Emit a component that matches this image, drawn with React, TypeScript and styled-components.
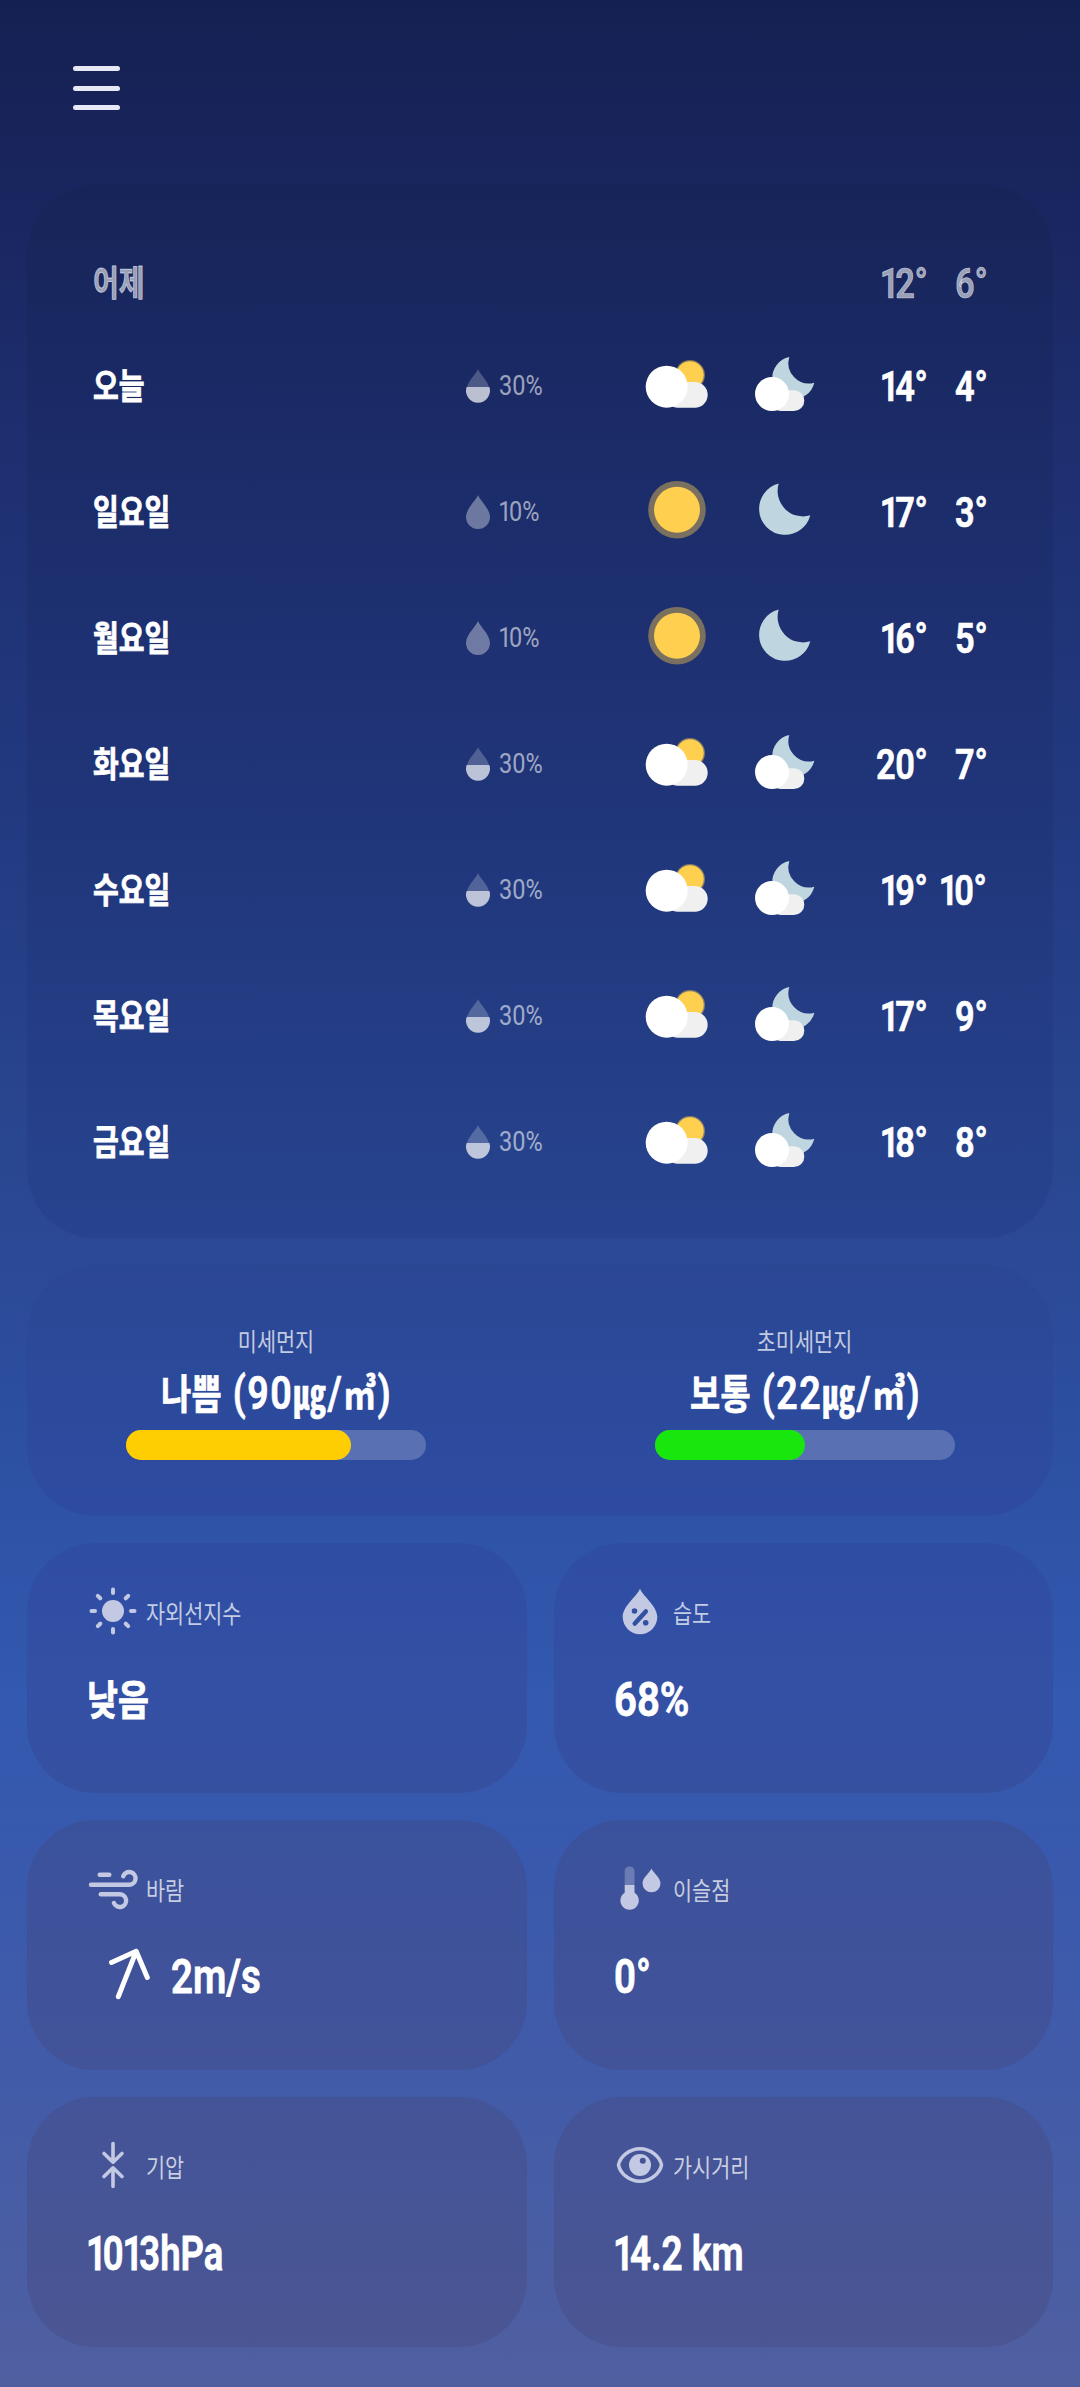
import React from "react";
import styled, { createGlobalStyle } from "styled-components";

const GlobalStyle = createGlobalStyle`
  * { box-sizing: border-box; }
  body {
    margin: 0;
    font-family: Roboto, "Noto Sans CJK KR", sans-serif;
    color: #fff;
  }
`;

const Screen = styled.main`
  width: 1080px;
  height: 2387px;
  padding: 0 27px;
  overflow: hidden;
  background: linear-gradient(
    180deg,
    #152052 0px,
    #19255e 190px,
    #1e2f70 450px,
    #223980 800px,
    #294790 1150px,
    #2b4996 1260px,
    #2e53a7 1530px,
    #3359b0 1700px,
    #3859ad 1850px,
    #415ba9 2050px,
    #475da5 2200px,
    #505fa0 2387px
  );
`;

const Header = styled.header`
  height: 185px;
  padding: 66px 0 0 46px;
`;

const MenuButton = styled.button`
  display: flex;
  flex-direction: column;
  gap: 14.5px;
  width: 47px;
  padding: 0;
  border: 0;
  background: none;
`;

const MenuLine = styled.span`
  height: 5px;
  border-radius: 2.5px;
  background: #e6e9f5;
`;

const Stack = styled.div`
  display: flex;
  flex-direction: column;
  gap: 27px;
`;

const Card = styled.section<{ $tint: string }>`
  border-radius: 68px;
  background: ${(p) => p.$tint};
`;

const ForecastCard = styled(Card)`
  height: 1053px;
  padding: 58px 66px 0;
`;

const Row = styled.div<{ $past?: boolean }>`
  display: grid;
  grid-template-columns: 373px 179px 108px 94px 81px 59px;
  align-items: center;
  height: ${(p) => (p.$past ? 80 : 126)}px;
  color: ${(p) => (p.$past ? "rgba(255,255,255,.58)" : "#fff")};
`;

/* The interface typeface is narrow, so glyph runs are condensed horizontally. */
const Narrow = styled.span<{ $origin?: string; $scale?: number }>`
  display: inline-block;
  white-space: nowrap;
  transform: scaleX(${(p) => p.$scale ?? 0.8});
  transform-origin: ${(p) => p.$origin ?? "left"} center;
`;

const Day = styled(Narrow)`
  margin-top: 4px;
  font-size: 35px;
  line-height: 48px;
  font-weight: 700;
  -webkit-text-stroke: 0.8px currentColor;
`;

const Rain = styled.div`
  display: flex;
  align-items: center;
  gap: 9px;
`;

const RainText = styled(Narrow)`
  font-size: 28px;
  line-height: 32px;
  color: rgba(255, 255, 255, 0.58);
`;

const Temp = styled(Narrow)`
  justify-self: end;
  font-size: 43px;
  line-height: 50px;
  font-weight: 600;
  letter-spacing: -0.4px;
  -webkit-text-stroke: 0.7px currentColor;
`;

const SlimOne = styled.span`
  margin: 0 -0.11em 0 -0.03em;
`;

const DustCard = styled(Card)`
  display: flex;
  gap: 229px;
  height: 251px;
  padding: 60px 98px 0 99px;
`;

const Dust = styled.div`
  display: flex;
  flex-direction: column;
  align-items: center;
  width: 300px;
`;

const Label = styled(Narrow)`
  font-size: 25px;
  line-height: 36px;
  color: rgba(255, 255, 255, 0.72);
`;

const Reading = styled(Narrow)`
  height: 60px;
  margin-top: 2px;
  font-size: 47px;
  line-height: 60px;
  font-weight: 600;
  letter-spacing: 1.8px;
  -webkit-text-stroke: 0.7px currentColor;
`;

const Hangul = styled.span`
  font-size: 41px;
  font-weight: 700;
`;

const Grade = styled(Hangul)`
  letter-spacing: 0.5px;
`;

const Track = styled.div`
  width: 100%;
  height: 30px;
  margin-top: 7px;
  border-radius: 15px;
  background: rgba(255, 255, 255, 0.21);
`;

const Fill = styled.div<{ $color: string }>`
  height: 100%;
  border-radius: 15px;
  background: ${(p) => p.$color};
`;

const Grid = styled.div`
  display: grid;
  grid-template-columns: 1fr 1fr;
  grid-auto-rows: 250px;
  gap: 27px;
`;

const Metric = styled(Card)`
  padding: 44px 0 0 60px;
`;

const MetricHead = styled.div`
  display: flex;
  align-items: center;
  gap: 9px;
  height: 48px;
  padding-left: 2px;
`;

const MetricLabel = styled(Label)`
  margin-top: 7px;
`;

const MetricValue = styled.div`
  display: flex;
  align-items: center;
  height: 60px;
  margin-top: 35px;
`;

const Value = styled(Narrow)`
  font-size: 48px;
  line-height: 60px;
  font-weight: 600;
  -webkit-text-stroke: 0.8px currentColor;
`;

const Soft = styled.svg`
  display: block;
  flex: none;
  overflow: visible;
  color: #c3c9e3;
`;

const WindArrow = styled.svg`
  display: block;
  flex: none;
  margin: -7px 21px 0 21px;
`;

const dropPath = "M12 0C13.6 5 24 13.5 24 22a12 12 0 0 1-24 0C0 13.5 10.4 5 12 0Z";

/* Tightens the side bearings of every "1" in a figure. */
function Figure({ children }: { children: string }) {
  return (
    <>
      {children.split(/(1)/).map((part, i) => (part === "1" ? <SlimOne key={i}>1</SlimOne> : part))}
    </>
  );
}

function Drop({ half }: { half: boolean }) {
  return (
    <svg width="24" height="34" viewBox="0 0 24 34">
      {half ? (
        <>
          <path d="M12 0C13.4 4.6 21.3 11 23 18H1C2.7 11 10.6 4.6 12 0Z" fill="#fff" opacity=".22" />
          <path d="M.6 18H23.4A12 12 0 1 1 .6 18Z" fill="#fff" opacity=".7" />
        </>
      ) : (
        <path d={dropPath} fill="#fff" opacity=".36" />
      )}
    </svg>
  );
}

function DayIcon({ cloudy }: { cloudy: boolean }) {
  return (
    <svg width="64" height="60" viewBox="0 0 64 60" overflow="visible">
      {cloudy ? (
        <>
          <circle cx="45" cy="19" r="15" fill="#ffd04f" opacity=".45" />
          <circle cx="45" cy="19" r="13.7" fill="#ffd04f" />
          <rect x="20" y="26" width="42.7" height="25.7" rx="12.85" fill="#f0f0f1" />
          <circle cx="21.7" cy="30.7" r="21" fill="#fff" />
        </>
      ) : (
        <>
          <circle cx="32" cy="27.7" r="28.8" fill="#7a705f" />
          <circle cx="32" cy="27.7" r="23" fill="#ffd04f" />
        </>
      )}
    </svg>
  );
}

function NightIcon({ cloudy }: { cloudy: boolean }) {
  return (
    <svg width="64" height="60" viewBox="0 0 64 60" overflow="visible">
      {cloudy ? (
        <>
          <path d="M36.3 1A20.5 20.5 0 0 0 61.3 26.7A21.3 21.3 0 1 1 36.3 1Z" fill="#bfd5df" />
          <rect x="17" y="34.3" width="34.3" height="20.7" rx="10.35" fill="#f0f0f1" />
          <circle cx="19" cy="38" r="17" fill="#fff" />
        </>
      ) : (
        <path d="M25.7 1.6A25.4 25.4 0 0 0 57.3 33.3A26 26 0 1 1 25.7 1.6Z" fill="#bfd5df" />
      )}
    </svg>
  );
}

const stroke = { fill: "none", stroke: "currentColor", strokeLinecap: "round", strokeLinejoin: "round" } as const;

function UvIcon() {
  return (
    <Soft width="48" height="48">
      <circle cx="24" cy="24" r="11" fill="currentColor" />
      {[0, 45, 90, 135, 180, 225, 270, 315].map((a) => (
        <path key={a} d="M24 2.5V6" transform={`rotate(${a} 24 24)`} {...stroke} strokeWidth="4" />
      ))}
    </Soft>
  );
}

function HumidityIcon() {
  return (
    <Soft width="48" height="48">
      <path
        d="M24 1.5C25.5 8 41.3 18.5 41.3 30a17.3 17.3 0 0 1-34.6 0C6.7 18.5 22.5 8 24 1.5Z"
        fill="currentColor"
      />
      <path d="M18.8 36.5L29.8 24.5" fill="none" stroke="#3351a3" strokeWidth="4.6" strokeLinecap="round" />
      <circle cx="18.5" cy="24" r="2.8" fill="#3351a3" />
      <circle cx="29.7" cy="35.8" r="2.8" fill="#3351a3" />
    </Soft>
  );
}

function WindIcon() {
  return (
    <Soft width="48" height="48">
      <g {...stroke} strokeWidth="4.4">
        <path d="M10.7 10.7H20.3" />
        <path d="M2 20.7H39.8A6.35 6.35 0 1 0 34.2 12.2" />
        <path d="M11.7 30.3H30.5A6.35 6.35 0 1 1 24.9 39" />
      </g>
    </Soft>
  );
}

function DewIcon() {
  return (
    <Soft width="48" height="48">
      <path d="M8.7 21V7.3a4.9 4.9 0 0 1 9.8 0V21Z" fill="currentColor" opacity=".35" />
      <path d="M8.7 21H18.5V28.7A9.2 9.2 0 1 1 8.7 28.7Z" fill="currentColor" />
      <path d="M35.5 4.5C36.7 8.3 44.5 13.5 44.5 19.3a9 9 0 0 1-18 0C26.5 13.5 34.3 8.3 35.5 4.5Z" fill="currentColor" />
    </Soft>
  );
}

function PressureIcon() {
  return (
    <Soft width="48" height="48">
      <g {...stroke} strokeWidth="3.6">
        <path d="M24 2.5V21M15 12.5L24 21.2L33 12.5" />
        <path d="M24 45.5V27M15 35.5L24 26.8L33 35.5" />
      </g>
    </Soft>
  );
}

function EyeIcon() {
  return (
    <Soft width="48" height="48">
      <path
        d="M2.5 24C4 16 13 7.8 24 7.8S44 16 45.5 24C44 32 35 40.2 24 40.2S4 32 2.5 24Z"
        {...stroke}
        strokeWidth="3.6"
      />
      <circle cx="24" cy="24" r="11" fill="currentColor" />
      <circle cx="26.8" cy="19.8" r="3" fill="#475394" />
    </Soft>
  );
}

const days = [
  { day: "오늘", rain: 30, high: 14, low: 4 },
  { day: "일요일", rain: 10, high: 17, low: 3 },
  { day: "월요일", rain: 10, high: 16, low: 5 },
  { day: "화요일", rain: 30, high: 20, low: 7 },
  { day: "수요일", rain: 30, high: 19, low: 10 },
  { day: "목요일", rain: 30, high: 17, low: 9 },
  { day: "금요일", rain: 30, high: 18, low: 8 },
];

const dust = [
  { label: "미세먼지", grade: "나쁨", amount: 90, level: 75, color: "#ffce02" },
  { label: "초미세먼지", grade: "보통", amount: 22, level: 50, color: "#18e70e" },
];

const metrics = [
  { label: "자외선지수", icon: <UvIcon />, value: "낮음", hangul: true, scale: 0.82 },
  { label: "습도", icon: <HumidityIcon />, value: "68%", scale: 0.835 },
  { label: "바람", icon: <WindIcon />, value: "2m/s", arrow: true },
  { label: "이슬점", icon: <DewIcon />, value: "0°" },
  { label: "기압", icon: <PressureIcon />, value: "1013hPa", scale: 0.76 },
  { label: "가시거리", icon: <EyeIcon />, value: "14.2 km", scale: 0.77 },
];

export default function App() {
  return (
    <>
      <GlobalStyle />
      <Screen>
        <Header>
          <MenuButton aria-label="메뉴">
            <MenuLine />
            <MenuLine />
            <MenuLine />
          </MenuButton>
        </Header>
        <Stack>
          <ForecastCard $tint="linear-gradient(180deg, rgba(18,34,78,.3), rgba(22,34,88,.2) 50%, rgba(28,48,125,.22))">
            <Row $past>
              <Day>어제</Day>
              <span />
              <span />
              <span />
              <Temp $origin="right">
                <Figure>12°</Figure>
              </Temp>
              <Temp $origin="right">6°</Temp>
            </Row>
            {days.map((d) => (
              <Row key={d.day}>
                <Day>{d.day}</Day>
                <Rain>
                  <Drop half={d.rain >= 30} />
                  <RainText $scale={0.84}>
                    <Figure>{`${d.rain}%`}</Figure>
                  </RainText>
                </Rain>
                <DayIcon cloudy={d.rain >= 30} />
                <NightIcon cloudy={d.rain >= 30} />
                <Temp $origin="right">
                  <Figure>{`${d.high}°`}</Figure>
                </Temp>
                <Temp $origin="right">
                  <Figure>{`${d.low}°`}</Figure>
                </Temp>
              </Row>
            ))}
          </ForecastCard>
          <DustCard $tint="linear-gradient(180deg, rgba(38,60,135,.16), rgba(45,58,150,.28))">
            {dust.map((d) => (
              <Dust key={d.label}>
                <Label $origin="center" $scale={0.83}>
                  {d.label}
                </Label>
                <Reading $origin="center">
                  <Grade>{d.grade}</Grade> ({d.amount}
                  <Hangul>㎍</Hangul>/<Hangul>㎥</Hangul>)
                </Reading>
                <Track>
                  <Fill $color={d.color} style={{ width: `${d.level}%` }} />
                </Track>
              </Dust>
            ))}
          </DustCard>
          <Grid>
            {metrics.map((m, i) => (
              <Metric
                key={m.label}
                $tint={
                  i < 2
                    ? "linear-gradient(180deg, rgba(48,62,155,.3), rgba(55,55,120,.26))"
                    : "rgba(68,62,110,.26)"
                }
              >
                <MetricHead>
                  {m.icon}
                  <MetricLabel $scale={0.83}>{m.label}</MetricLabel>
                </MetricHead>
                <MetricValue>
                  {m.arrow && (
                    <WindArrow width="42" height="52" fill="none" stroke="#fff" strokeWidth="5" strokeLinecap="round" strokeLinejoin="round">
                      <path d="M10.3 48.7L28.2 3.3M3.5 14.5L28.2 3.3L39.3 29.5" />
                    </WindArrow>
                  )}
                  <Value $scale={m.scale}>
                    {m.hangul ? <Hangul>{m.value}</Hangul> : <Figure>{m.value}</Figure>}
                  </Value>
                </MetricValue>
              </Metric>
            ))}
          </Grid>
        </Stack>
      </Screen>
    </>
  );
}
